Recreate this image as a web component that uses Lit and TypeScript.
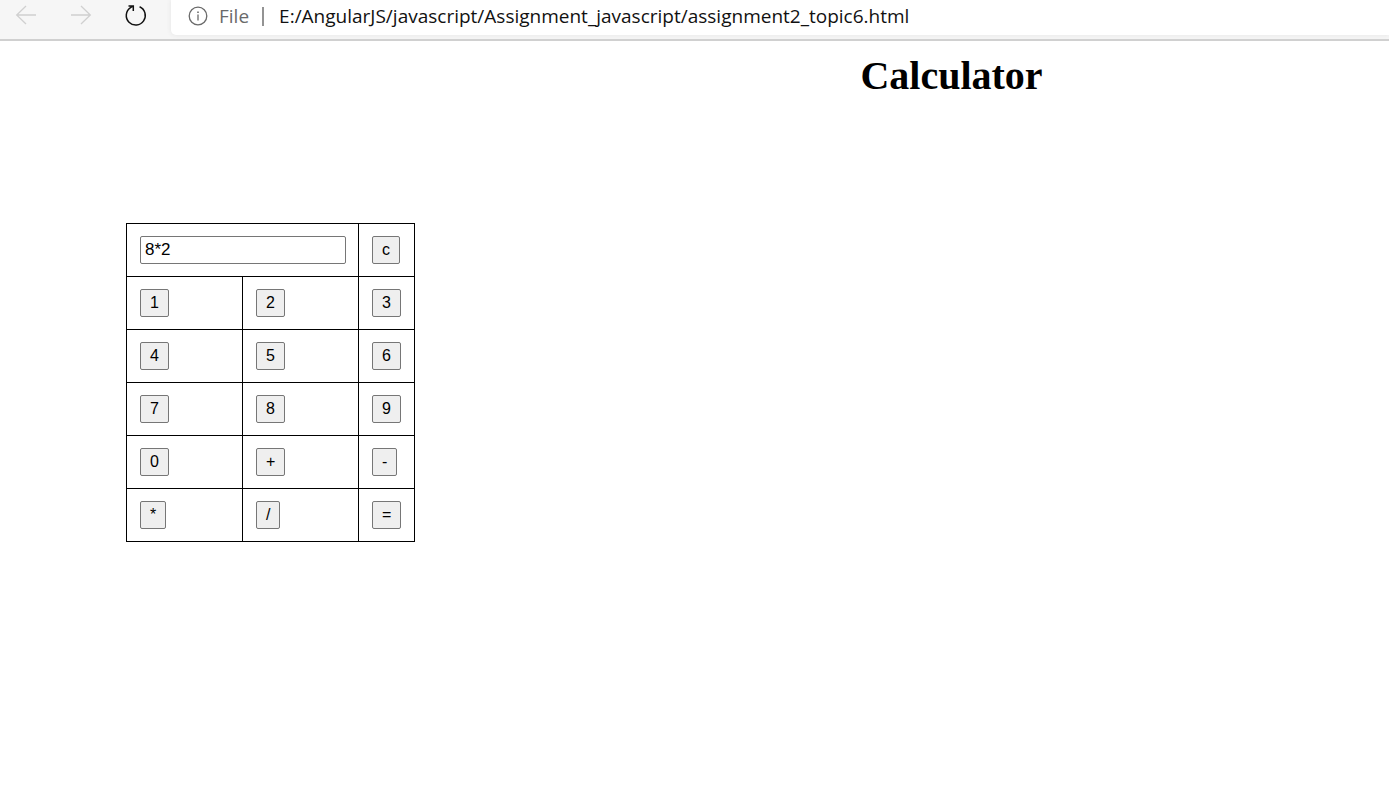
import { LitElement, html, css } from "lit";
import { customElement, state } from "lit/decorators.js";

@customElement("browser-bar")
class BrowserBar extends LitElement {
  static styles = css`
    :host {
      display: block;
    }
    .bar {
      display: flex;
      height: 39px;
      background: #f6f6f6;
      border-bottom: 2px solid #d0d0d0;
      font-family: "Open Sans", "Noto Sans", sans-serif;
    }
    .nav {
      display: flex;
      gap: 31px;
      padding: 3px 23px 0 14px;
      flex: none;
    }
    .tool {
      width: 24px;
      height: 24px;
      padding: 0;
      border: 0;
      background: none;
      color: #111;
    }
    .tool:disabled {
      color: #d0d0d0;
    }
    svg {
      display: block;
      fill: none;
      stroke: currentColor;
    }
    .address {
      display: flex;
      flex: 1;
      min-width: 0;
      align-items: center;
      height: 35px;
      padding: 0 0 0 17px;
      background: #fff;
      border-bottom-left-radius: 5px;
      box-shadow: 0 0 5px #e4e4e4;
      box-sizing: border-box;
      font-size: 19px;
      color: #6a6a6a;
    }
    .text {
      padding: 0 13px 3px 11px;
    }
    .rule {
      width: 2px;
      height: 19px;
      margin-bottom: 3px;
      background: #939393;
    }
    .info {
      margin-bottom: 4px;
    }
    .url {
      flex: 1;
      min-width: 0;
      margin-left: 15px;
      padding: 0 0 3px;
      border: 0;
      outline: 0;
      background: none;
      font: inherit;
      color: #111;
    }
  `;

  render() {
    return html`
      <div class="bar">
        <div class="nav">
          <button class="tool" aria-label="Back" disabled>
            <svg width="24" height="24" viewBox="0 0 24 24" stroke-width="1.3">
              <path d="M22 12H3M12 3L2.700 12L12 21" />
            </svg>
          </button>
          <button class="tool" aria-label="Forward" disabled>
            <svg width="24" height="24" viewBox="0 0 24 24" stroke-width="1.3">
              <path d="M2 12H21M12 3L21.300 12L12 21" />
            </svg>
          </button>
          <button class="tool" aria-label="Refresh">
            <svg width="24" height="24" viewBox="0 0 24 24" stroke-width="1.500">
              <path d="M15.600 3.800A9.500 9.500 0 1 1 6.500 4.600L9 3.200M4.500 3H9.300V8" />
            </svg>
          </button>
        </div>
        <div class="address">
          <svg class="info" width="20" height="20" viewBox="0 0 20 20" stroke-width="1.3">
            <circle cx="10" cy="10" r="8.800" />
            <path d="M10 8.500V14.500" />
            <path d="M10 5.500V7" stroke-width="1.600" />
          </svg>
          <span class="text">File</span>
          <span class="rule"></span>
          <input
            class="url"
            aria-label="Address"
            spellcheck="false"
            value="E:/AngularJS/javascript/Assignment_javascript/assignment2_topic6.html"
          />
        </div>
      </div>
    `;
  }
}

@customElement("app-root")
class AppRoot extends LitElement {
  static styles = css`
    :host {
      display: block;
      min-height: 100vh;
      background: #fff;
      color: #000;
      font-family: "Liberation Serif", serif;
      overflow: hidden;
    }
    h1 {
      margin: 12px 0 124px;
      padding-left: 514px;
      font-size: 40px;
      line-height: 46px;
      text-align: center;
    }
    table {
      width: 289px;
      margin-left: 126px;
      border-collapse: collapse;
      table-layout: fixed;
    }
    .wide {
      width: 116px;
    }
    td {
      height: 28px;
      padding: 12px;
      padding-left: 13px;
      border: 1px solid #000;
      line-height: 0;
      vertical-align: top;
    }
    .display,
    .key {
      height: 28px;
      box-sizing: border-box;
      border: 1px solid #767676;
      border-radius: 2px;
      font: 16px "Liberation Sans", sans-serif;
      color: #000;
    }
    .display {
      width: 100%;
      padding: 0 4px 1px;
      background: #fff;
      font-size: 17px;
    }
    .key {
      padding: 0 9px 1px;
      background: #efefef;
    }
  `;

  @state() private expression = "8*2";

  private rows = [
    ["1", "2", "3"],
    ["4", "5", "6"],
    ["7", "8", "9"],
    ["0", "+", "-"],
    ["*", "/", "="],
  ];

  private press(key: string) {
    this.expression = key === "=" ? this.evaluate() : this.expression + key;
  }

  private evaluate(): string {
    const parts = this.expression.match(/\d+(\.\d+)?|[-+*/]/g) ?? [];
    const terms: number[] = [];
    let op = "+";
    for (const part of parts) {
      if (/^[-+*/]$/.test(part)) {
        op = part;
        continue;
      }
      const n = Number(part);
      if (op === "*") terms.push((terms.pop() ?? 0) * n);
      else if (op === "/") terms.push((terms.pop() ?? 0) / n);
      else terms.push(op === "-" ? -n : n);
    }
    return String(terms.reduce((a, b) => a + b, 0));
  }

  render() {
    return html`
      <browser-bar></browser-bar>
      <main>
        <h1>Calculator</h1>
        <table>
          <colgroup>
            <col class="wide" />
            <col class="wide" />
            <col />
          </colgroup>
          <tbody>
            <tr>
              <td colspan="2">
                <input
                  class="display"
                  aria-label="Expression"
                  .value=${this.expression}
                  @input=${(e: Event) => (this.expression = (e.target as HTMLInputElement).value)}
                />
              </td>
              <td>
                <button class="key" @click=${() => (this.expression = "")}>c</button>
              </td>
            </tr>
            ${this.rows.map(
              (row) => html`<tr>
                ${row.map(
                  (key) => html`<td>
                    <button class="key" @click=${() => this.press(key)}>${key}</button>
                  </td>`
                )}
              </tr>`
            )}
          </tbody>
        </table>
      </main>
    `;
  }
}
